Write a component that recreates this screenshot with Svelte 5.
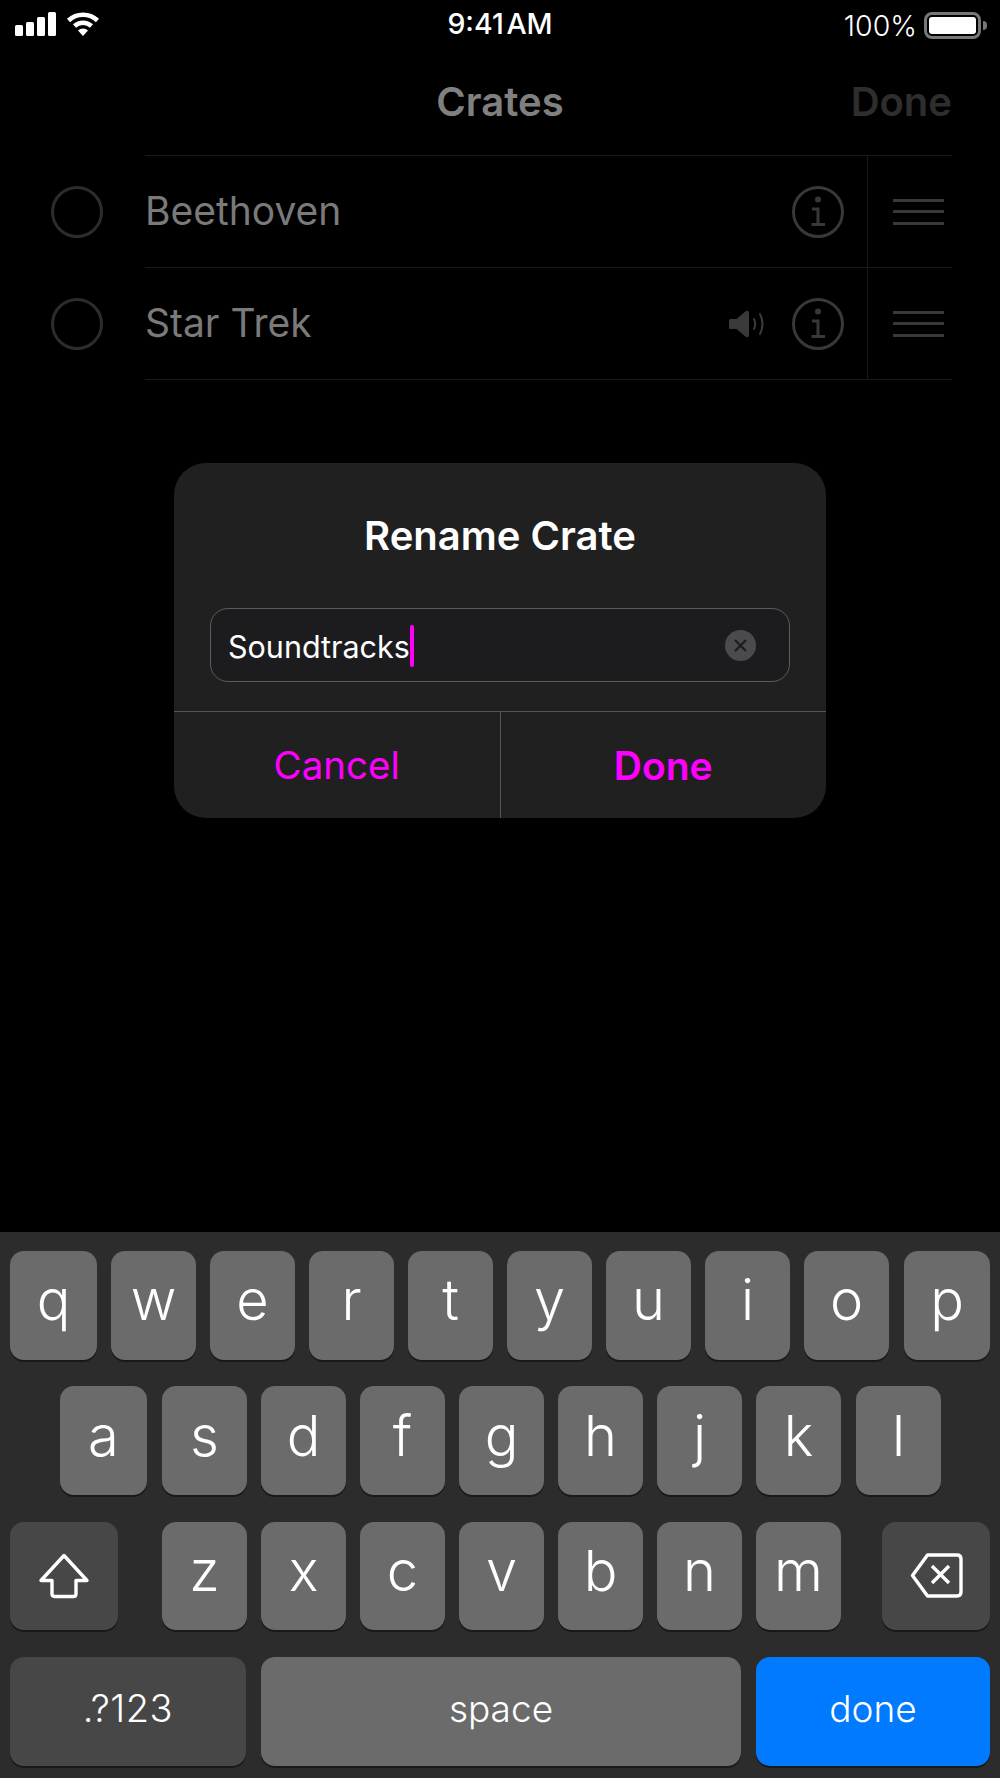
<script>
	const rows = [
		['q', 'w', 'e', 'r', 't', 'y', 'u', 'i', 'o', 'p'],
		['a', 's', 'd', 'f', 'g', 'h', 'j', 'k', 'l']
	]
	const thirdRow = ['z', 'x', 'c', 'v', 'b', 'n', 'm']
	const crates = [
		{ name: 'Beethoven', playing: false },
		{ name: 'Star Trek', playing: true }
	]
</script>

<div class="phone">
	<header class="status">
		<div class="status-left">
			<div class="signal">
				<span class="bar b1"></span>
				<span class="bar b2"></span>
				<span class="bar b3"></span>
				<span class="bar b4"></span>
			</div>
			<svg class="wifi" width="34" height="24" viewBox="0 0 34 24">
				<path d="M2.500 8.500A21 21 0 0 1 31.500 8.500" fill="none" stroke="#fff" stroke-width="4.500" />
				<path d="M8.500 14A12.500 12.500 0 0 1 25.500 14" fill="none" stroke="#fff" stroke-width="4.500" />
				<path d="M12 18.500A7.500 7.500 0 0 1 22 18.500L17 24Z" fill="#fff" />
			</svg>
		</div>
		<div class="time">9:41 AM</div>
		<div class="status-right">
			<span class="percent">100%</span>
			<span class="battery"><span class="charge"></span></span>
			<span class="nub"></span>
		</div>
	</header>

	<nav class="nav">
		<h1>Crates</h1>
		<span class="nav-done">Done</span>
	</nav>

	<section class="list">
		{#each crates as crate, i}
			<div class="row" class:first={i === 0}>
				<div class="radio-cell"><span class="radio"></span></div>
				<div class="cell">
					<span class="name">{crate.name}</span>
					{#if crate.playing}
						<svg class="speaker" width="36" height="28" viewBox="0 0 36 28">
							<path d="M0 10.500Q0 9 1.500 9H7.500L17 1Q20 0 20 3V25Q20 28 17 27L7.500 19H1.500Q0 19 0 17.500Z" fill="#3a3a3a" />
							<path d="M25 9Q27.500 14 25 19" fill="none" stroke="#3a3a3a" stroke-width="2" stroke-linecap="round" />
							<path d="M31 4Q36 14 31 24" fill="none" stroke="#3a3a3a" stroke-width="2" stroke-linecap="round" />
						</svg>
					{/if}
					<svg class="info" width="52" height="52" viewBox="0 0 52 52">
						<circle cx="26" cy="26" r="24.500" fill="none" stroke="#383838" stroke-width="3" />
						<circle cx="26" cy="13.500" r="3" fill="#383838" />
						<path d="M20 23H26V38.500M19.500 38.500H33" fill="none" stroke="#383838" stroke-width="3" />
					</svg>
					<div class="handle">
						<span></span>
						<span></span>
						<span></span>
					</div>
				</div>
			</div>
		{/each}
	</section>

	<div class="dialog">
		<h2>Rename Crate</h2>
		<div class="field">
			<span class="value">Soundtracks</span>
			<span class="caret"></span>
			<span class="clear">
				<svg width="15" height="15" viewBox="0 0 15 15">
					<path d="M2 2L13 13M13 2L2 13" fill="none" stroke="#1c1c1e" stroke-width="2.200" />
				</svg>
			</span>
		</div>
		<div class="actions">
			<button type="button">Cancel</button>
			<button type="button" class="strong">Done</button>
		</div>
	</div>

	<section class="keyboard">
		{#each rows as row, r}
			<div class="key-row" class:second={r === 1}>
				{#each row as key, i}
					<button
						type="button"
						class="key letter"
						class:head={i === 0}
						class:tail={i === row.length - 1}
					>{key}</button>
				{/each}
			</div>
		{/each}
		<div class="key-row third">
			<button type="button" class="key special mod" aria-label="shift">
				<svg width="52" height="46" viewBox="0 0 52 46">
					<path d="M26 2.500L49 27.500H38V41Q38 43.500 35.500 43.500H16.500Q14 43.500 14 41V27.500H3Z" fill="none" stroke="#fff" stroke-width="3.400" stroke-linejoin="round" />
				</svg>
			</button>
			<div class="letters">
				{#each thirdRow as key}
					<button type="button" class="key letter">{key}</button>
				{/each}
			</div>
			<button type="button" class="key special mod" aria-label="delete">
				<svg width="53" height="45" viewBox="0 0 53 45">
					<path d="M2.500 22.500L17.500 2H47Q51 2 51 6V39Q51 43 47 43H17.500Z" fill="none" stroke="#fff" stroke-width="3.400" stroke-linejoin="round" />
					<path d="M22 13L39 30M39 13L22 30" fill="none" stroke="#fff" stroke-width="3.400" />
				</svg>
			</button>
		</div>
		<div class="key-row bottom">
			<button type="button" class="key special label numbers">.?123</button>
			<button type="button" class="key label space">space</button>
			<button type="button" class="key label go">done</button>
		</div>
	</section>
</div>

<style>
	:global(body) {
		margin: 0;
		background: #000;
	}

	.phone {
		position: relative;
		width: 1000px;
		height: 1778px;
		display: flex;
		flex-direction: column;
		background: #000;
		color: #fff;
		font-family: Inter, 'Liberation Sans', sans-serif;
		overflow: hidden;
	}

	/* status bar */
	.status {
		height: 50px;
		display: flex;
		align-items: center;
		justify-content: space-between;
		position: relative;
	}

	.status-left {
		display: flex;
		align-items: flex-end;
		gap: 10px;
		margin-left: 15px;
		margin-bottom: 2px;
		height: 24px;
	}

	.signal {
		display: flex;
		align-items: flex-end;
		gap: 3.500px;
		height: 24px;
	}

	.bar {
		width: 7.500px;
		background: #fff;
		border-radius: 1.500px;
	}

	.b1 { height: 11px; }
	.b2 { height: 14px; }
	.b3 { height: 19px; }
	.b4 { height: 24px; }

	.time {
		position: absolute;
		left: 0;
		right: 0;
		top: 6px;
		text-align: center;
		font-size: 28.500px;
		font-weight: 500;
		word-spacing: -5px;
	}

	.status-right {
		display: flex;
		align-items: center;
		margin-right: 13px;
	}

	.percent {
		font-size: 28.500px;
		font-weight: 300;
		margin-right: 7px;
	}

	.battery {
		width: 57px;
		height: 27px;
		box-sizing: border-box;
		border: 3px solid #777;
		border-radius: 8px;
		padding: 2px;
		display: flex;
	}

	.charge {
		flex: 1;
		background: #fff;
		border-radius: 3px;
	}

	.nub {
		width: 4px;
		height: 9px;
		margin-left: 2px;
		background: #777;
		border-radius: 0 4px 4px 0;
	}

	/* nav */
	.nav {
		height: 105px;
		display: flex;
		align-items: center;
		justify-content: center;
		position: relative;
	}

	.nav h1 {
		margin: 0 0 2px;
		font-size: 40px;
		font-weight: 600;
		color: #808080;
	}

	.nav-done {
		position: absolute;
		right: 48px;
		top: 27px;
		font-size: 40px;
		font-weight: 600;
		color: #2e2e2e;
	}

	/* list */
	.row {
		height: 112px;
		display: flex;
	}

	.row.first {
		height: 113px;
	}

	.radio-cell {
		width: 145px;
		flex: none;
		display: flex;
		align-items: center;
		padding-left: 51px;
		box-sizing: border-box;
	}

	.radio {
		width: 52px;
		height: 52px;
		box-sizing: border-box;
		border: 3px solid #2c2c2c;
		border-radius: 50%;
	}

	.cell {
		flex: 1;
		margin-right: 48px;
		display: flex;
		align-items: center;
		border-bottom: 1px solid #191919;
		box-sizing: border-box;
	}

	.row.first .cell {
		border-top: 1px solid #191919;
	}

	.name {
		flex: 1;
		font-size: 39px;
		color: #7a7a7a;
		padding-bottom: 3px;
	}

	.speaker {
		margin-right: 27px;
	}

	.info {
		margin-right: 23px;
	}

	.handle {
		align-self: stretch;
		width: 85px;
		box-sizing: border-box;
		border-left: 1px solid #191919;
		padding-left: 25px;
		display: flex;
		flex-direction: column;
		justify-content: center;
		gap: 8.500px;
	}

	.handle span {
		width: 51px;
		height: 3px;
		background: #383838;
	}

	/* dialog */
	.dialog {
		position: absolute;
		left: 174px;
		top: 463px;
		width: 652px;
		height: 355px;
		display: flex;
		flex-direction: column;
		background: #202020;
		border-radius: 32px;
		overflow: hidden;
	}

	.dialog h2 {
		margin: 0;
		height: 145px;
		display: flex;
		align-items: center;
		justify-content: center;
		font-size: 40px;
		font-weight: 600;
	}

	.field {
		height: 74px;
		margin: 0 36px;
		padding: 2px 33px 0 17px;
		display: flex;
		align-items: center;
		box-sizing: border-box;
		background: #1c1c1e;
		border: 1px solid #5c5c5c;
		border-radius: 18px;
	}

	.value {
		font-size: 30.500px;
		color: #fff;
	}

	.caret {
		width: 4px;
		height: 42px;
		background: #f0f;
		border-radius: 2px;
	}

	.clear {
		width: 31px;
		height: 31px;
		margin-left: auto;
		margin-top: -2px;
		border-radius: 50%;
		background: #4b4b4d;
		display: flex;
		align-items: center;
		justify-content: center;
	}

	.actions {
		flex: 1;
		margin-top: 29px;
		display: flex;
		border-top: 1px solid #555;
	}

	.actions button {
		flex: 1;
		border: 0;
		padding: 0;
		background: none;
		color: #f0f;
		font-family: inherit;
		font-size: 38.500px;
	}

	.actions .strong {
		font-weight: 600;
		font-size: 39px;
		border-left: 1px solid #555;
	}

	/* keyboard */
	.keyboard {
		position: absolute;
		left: 0;
		right: 0;
		bottom: 0;
		height: 546px;
		box-sizing: border-box;
		padding: 19px 10px 0;
		display: flex;
		flex-direction: column;
		gap: 26.670px;
		background: #2c2c2c;
	}

	.key-row {
		display: flex;
		gap: 14px;
		height: 108.670px;
	}

	.key-row.second {
		margin: 0 49px 0 50px;
	}

	.key-row.third {
		justify-content: space-between;
		gap: 0;
	}

	.key-row.bottom {
		gap: 15px;
	}

	.letters {
		display: flex;
		gap: 14px;
		margin-left: 3px;
	}

	.key {
		box-sizing: border-box;
		border: 0;
		padding: 0;
		height: 100%;
		display: flex;
		align-items: center;
		justify-content: center;
		background: #6b6b6b;
		color: #fff;
		border-radius: 14px;
		box-shadow: 0 2px 0 #191919;
		font-family: inherit;
	}

	.key.letter {
		width: 85px;
		font-size: 56px;
		font-weight: 300;
		padding-bottom: 10px;
	}

	.key.head {
		width: 87px;
	}

	.key.tail {
		width: 86px;
		margin-left: 1px;
	}

	.second .key.head {
		margin-right: 1px;
	}

	.second .key.tail {
		width: 85px;
	}

	.key.special {
		background: #474747;
	}

	.key.mod {
		width: 108px;
	}

	.key.label {
		font-size: 37px;
		font-weight: 300;
		padding-bottom: 6px;
	}

	.key.numbers {
		width: 236px;
		font-size: 38px;
		letter-spacing: 0.500px;
	}

	.space {
		width: 480px;
	}

	.go {
		width: 234px;
	}

	.key.go {
		background: #007aff;
	}
</style>
